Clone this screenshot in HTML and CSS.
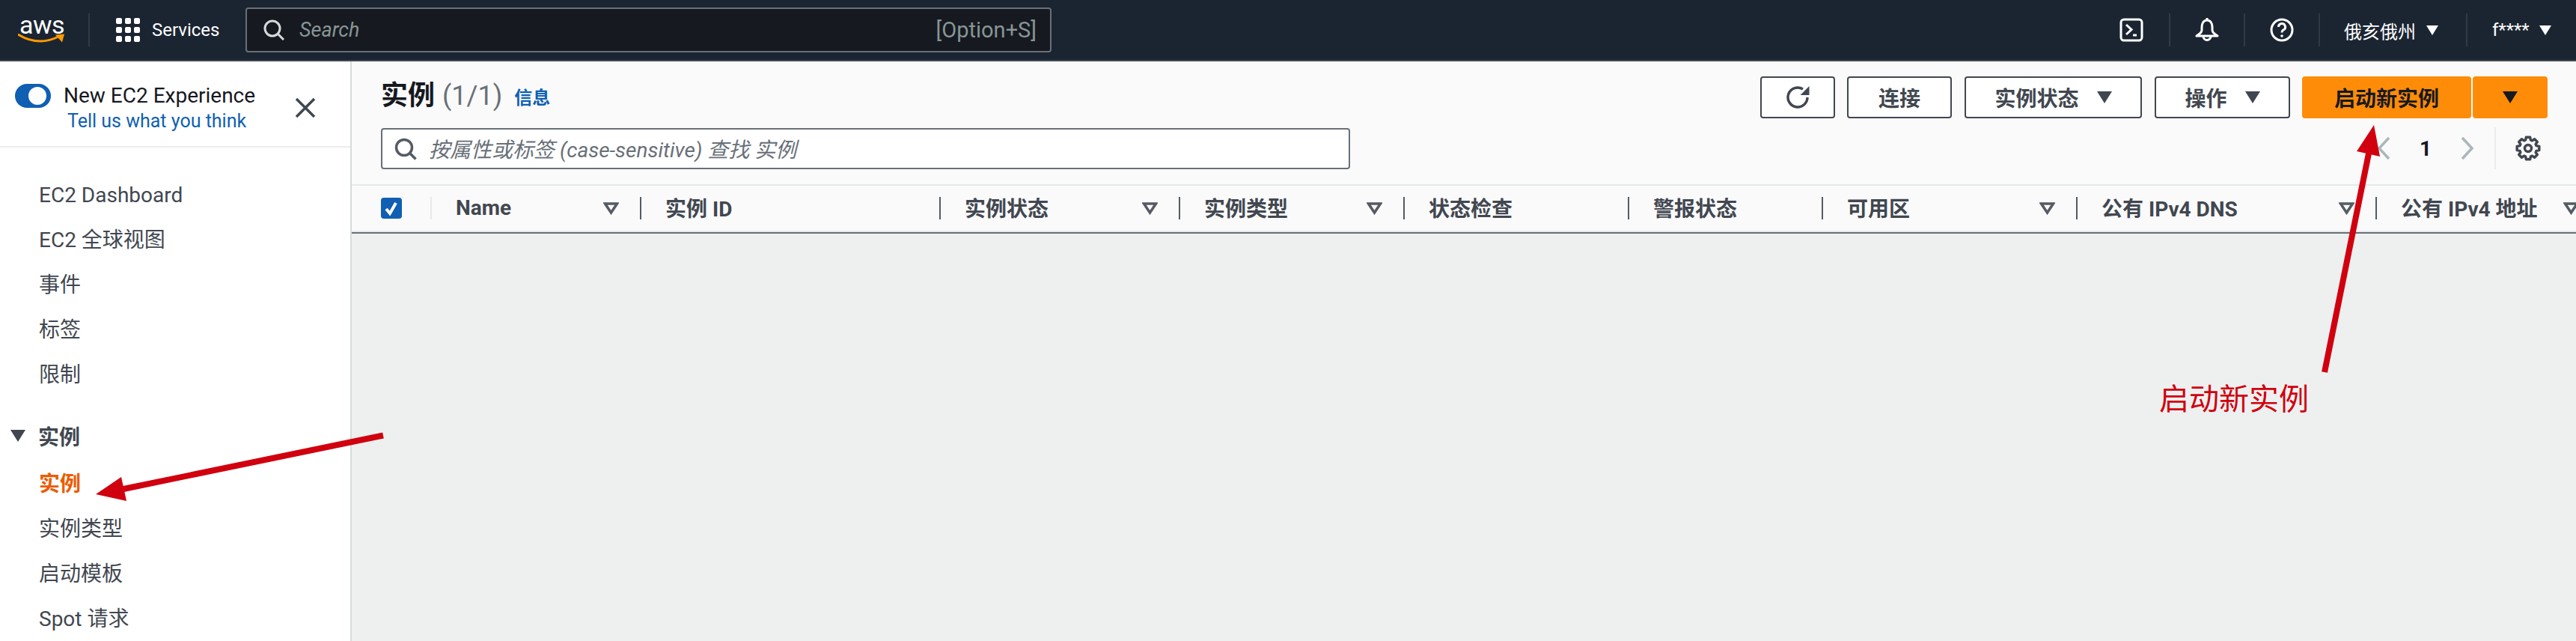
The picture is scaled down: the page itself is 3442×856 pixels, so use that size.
FILE: index.html
```html
<!DOCTYPE html>
<html lang="zh">
<head>
<meta charset="utf-8">
<title>实例 | EC2</title>
<link rel="stylesheet" href="styles.css">
</head>
<body>
<div class="page">
  <header class="topbar">
    <div class="logo">
      <span class="logo-text">aws</span>
      <svg class="logo-smile" viewBox="0 0 63 13" width="63" height="13"><path d="M1 1.5C10 7 19 10 30 10c8 0 17-2.500 25-6.500" fill="none" stroke="#f90" stroke-width="3" stroke-linecap="round"/><path d="M50 1.500l12-1-3 11z" fill="#f90"/></svg>
    </div>
    <div class="services">
      <svg viewBox="0 0 32 32" width="32" height="32" fill="#fff"><rect x="0" y="0" width="8" height="8" rx="2"/><rect x="12" y="0" width="8" height="8" rx="2"/><rect x="24" y="0" width="8" height="8" rx="2"/><rect x="0" y="12" width="8" height="8" rx="2"/><rect x="12" y="12" width="8" height="8" rx="2"/><rect x="24" y="12" width="8" height="8" rx="2"/><rect x="0" y="24" width="8" height="8" rx="2"/><rect x="12" y="24" width="8" height="8" rx="2"/><rect x="24" y="24" width="8" height="8" rx="2"/></svg>
      <span>Services</span>
    </div>
    <div class="global-search">
      <svg class="search-icon" viewBox="0 0 28 28" width="28" height="28" fill="none" stroke="#d5dbdb" stroke-width="3"><circle cx="12" cy="12" r="10"/><path d="M19 19l8 8"/></svg>
      <span class="global-search-text">Search</span>
      <span class="shortcut">[Option+S]</span>
    </div>
    <div class="top-actions">
      <div class="top-cell icon-cell">
        <svg viewBox="0 0 32 32" width="32" height="32" fill="none" stroke="#fff" stroke-width="3"><rect x="2" y="2" width="28" height="28" rx="4"/><path d="M9 9l7 6.500-7 6.500M18 23h5"/></svg>
      </div>
      <div class="top-cell icon-cell">
        <svg viewBox="0 0 32 32" width="32" height="32" fill="none" stroke="#fff" stroke-width="3" stroke-linejoin="round"><path d="M16 3c-5 0-7 5-7 9v4c0 4-3 5-7 8h28c-4-3-7-4-7-8v-4c0-4-2-9-7-9z"/><path d="M11 24.500a5 5 0 0 0 10 0"/><path d="M16 0v3"/></svg>
      </div>
      <div class="top-cell icon-cell">
        <svg viewBox="0 0 32 32" width="32" height="32" fill="none" stroke="#fff" stroke-width="3"><circle cx="16" cy="16" r="14"/><path d="M11.500 12a4.500 4.500 0 1 1 6.500 4c-1.500.8-2 1.800-2 3.500"/><circle cx="16" cy="24" r="1.800" fill="#fff" stroke="none"/></svg>
      </div>
      <div class="top-cell region-cell"><span>俄亥俄州</span><i class="caret caret-white"></i></div>
      <div class="top-cell user-cell"><span>f****</span><i class="caret caret-white"></i></div>
    </div>
  </header>

  <div class="layout">
    <aside class="sidebar">
      <div class="experience">
        <span class="toggle"><span class="toggle-knob"></span></span>
        <div class="experience-text">
          <div class="experience-title">New EC2 Experience</div>
          <a class="experience-link">Tell us what you think</a>
        </div>
        <svg class="close-icon" viewBox="0 0 28 28" width="28" height="28" fill="none" stroke="#414750" stroke-width="3.500"><path d="M2 2l24 24M26 2L2 26"/></svg>
      </div>
      <nav class="nav">
        <div class="nav-item">EC2 Dashboard</div>
        <div class="nav-item">EC2 全球视图</div>
        <div class="nav-item">事件</div>
        <div class="nav-item">标签</div>
        <div class="nav-item">限制</div>
        <div class="nav-group"><i class="caret caret-dark"></i><span>实例</span></div>
        <div class="nav-item nav-active">实例</div>
        <div class="nav-item">实例类型</div>
        <div class="nav-item">启动模板</div>
        <div class="nav-item">Spot 请求</div>
      </nav>
    </aside>

    <main class="content">
      <section class="panel">
        <div class="panel-top">
          <div class="panel-left">
            <div class="title-row">
              <h1 class="title">实例</h1>
              <span class="count">(1/1)</span>
              <a class="info">信息</a>
            </div>
            <div class="filter">
              <svg viewBox="0 0 30 30" width="30" height="30" fill="none" stroke="#545b64" stroke-width="3.500"><circle cx="13" cy="13" r="10.500"/><path d="M20.500 20.500l8 8"/></svg>
              <span class="filter-text">按属性或标签 (case-sensitive) 查找 实例</span>
            </div>
          </div>
          <div class="panel-right">
            <div class="buttons">
              <button class="btn btn-refresh"><svg viewBox="0 0 32 32" width="32" height="32" fill="none" stroke="#414750" stroke-width="3.500"><path d="M29 16a13 13 0 1 1-6-11"/><path d="M31.500 1v12h-12z" fill="#414750" stroke="none"/></svg></button>
              <button class="btn btn-connect">连接</button>
              <button class="btn btn-state"><span>实例状态</span><i class="caret caret-dark"></i></button>
              <button class="btn btn-actions"><span>操作</span><i class="caret caret-dark"></i></button>
              <button class="btn-primary btn-launch">启动新实例</button>
              <button class="btn-primary btn-launch-more"><i class="caret caret-black"></i></button>
            </div>
            <div class="pager">
              <svg class="chev" viewBox="0 0 18 32" width="18" height="32" fill="none" stroke="#aab7b8" stroke-width="3.500"><path d="M16 2L3 16l13 14"/></svg>
              <span class="page-num">1</span>
              <svg class="chev" viewBox="0 0 18 32" width="18" height="32" fill="none" stroke="#aab7b8" stroke-width="3.500"><path d="M2 2l13 14L2 30"/></svg>
              <div class="pager-settings">
                <svg viewBox="0 0 34 34" width="34" height="34" fill="none" stroke="#414750" stroke-width="3.500" stroke-linejoin="round"><g transform="translate(1 1)"><polygon points="18.600,1.200 19.400,5 21.400,5.850 24.600,3.700 28.300,7.400 26.150,10.600 27,12.640 30.800,13.400 30.800,18.600 27,19.360 26.150,21.400 28.300,24.600 24.600,28.300 21.400,26.150 19.400,27 18.600,30.800 13.400,30.800 12.600,27 10.600,26.150 7.400,28.300 3.700,24.600 5.850,21.400 5,19.360 1.200,18.600 1.200,13.400 5,12.640 5.850,10.600 3.700,7.400 7.400,3.700 10.600,5.850 12.600,5 13.400,1.200"/><circle cx="16" cy="16" r="4.500"/></g></svg>
              </div>
            </div>
          </div>
        </div>
        <div class="thead">
          <div class="th th-check"><span class="checkbox"><svg viewBox="0 0 28 28" width="28" height="28" fill="none" stroke="#fff" stroke-width="4"><path d="M7 15l5 6 8-14"/></svg></span></div>
          <div class="th th-first"><span>Name</span><svg class="sort" viewBox="0 0 21 17" width="21" height="17" fill="none" stroke="#545b64" stroke-width="3.500"><path d="M2.500 2h16l-8 12z"/></svg></div>
          <div class="th"><span>实例 ID</span></div>
          <div class="th"><span>实例状态</span><svg class="sort" viewBox="0 0 21 17" width="21" height="17" fill="none" stroke="#545b64" stroke-width="3.500"><path d="M2.500 2h16l-8 12z"/></svg></div>
          <div class="th"><span>实例类型</span><svg class="sort" viewBox="0 0 21 17" width="21" height="17" fill="none" stroke="#545b64" stroke-width="3.500"><path d="M2.500 2h16l-8 12z"/></svg></div>
          <div class="th"><span>状态检查</span></div>
          <div class="th"><span>警报状态</span></div>
          <div class="th"><span>可用区</span><svg class="sort" viewBox="0 0 21 17" width="21" height="17" fill="none" stroke="#545b64" stroke-width="3.500"><path d="M2.500 2h16l-8 12z"/></svg></div>
          <div class="th"><span>公有 IPv4 DNS</span><svg class="sort" viewBox="0 0 21 17" width="21" height="17" fill="none" stroke="#545b64" stroke-width="3.500"><path d="M2.500 2h16l-8 12z"/></svg></div>
          <div class="th"><span>公有 IPv4 地址</span><svg class="sort" viewBox="0 0 21 17" width="21" height="17" fill="none" stroke="#545b64" stroke-width="3.500"><path d="M2.500 2h16l-8 12z"/></svg></div>
        </div>
      </section>
    </main>
  </div>

  <svg class="arrows" viewBox="0 0 3442 856" width="3442" height="856">
    <path d="M512 581.500L165 653" stroke="#d0000f" stroke-width="8" fill="none"/>
    <polygon points="128,660 162,637 169,669" fill="#d0000f"/>
    <path d="M3106 497L3165 205" stroke="#d0000f" stroke-width="8" fill="none"/>
    <polygon points="3172,167 3149,202 3180,209" fill="#d0000f"/>
  </svg>
  <span class="note">启动新实例</span>
</div>
</body>
</html>
```
FILE: styles.css
```css
* { box-sizing: border-box; }
html, body { margin: 0; padding: 0; }
body { font-family: Roboto, "Noto Sans CJK SC", sans-serif; color: #414750; background: #eef0f0; }
.page { position: relative; width: 3442px; height: 856px; overflow: hidden; }

.caret { display: block; width: 0; height: 0; border-left: 10px solid transparent; border-right: 10px solid transparent; border-top: 16px solid #414750; }
.caret-white { border-left-width: 8px; border-right-width: 8px; border-top: 13px solid #fff; }
.caret-black { border-top-color: #16191f; }

.topbar { display: flex; align-items: center; height: 82px; background: #1b2532; border-bottom: 2px solid #414750; color: #fff; }
.logo { position: relative; width: 120px; height: 44px; padding-left: 26px; border-right: 2px solid #2f3a47; flex: none; }
.logo-text { display: block; font-size: 34px; line-height: 30px; letter-spacing: -.5px; font-weight: 400; color: #fff; }
.logo-smile { position: absolute; left: 24px; top: 27px; }
.services { display: flex; align-items: center; gap: 16px; width: 208px; padding-left: 35px; font-size: 24px; flex: none; }
.global-search { display: flex; align-items: center; width: 1077px; height: 60px; padding: 0 18px 0 22px; background: #16191f; border: 2px solid #687078; border-radius: 4px; color: #879596; flex: none; }
.search-icon { flex: none; }
.global-search-text { margin-left: 20px; font-size: 27px; font-style: italic; }
.shortcut { margin-left: auto; font-size: 29px; }
.top-actions { display: flex; align-items: center; margin-left: auto; height: 44px; }
.top-cell { display: flex; align-items: center; height: 44px; }
.top-cell + .top-cell { border-left: 2px solid #2f3a47; }
.icon-cell { width: 100px; justify-content: center; }
.region-cell { width: 197px; padding-left: 32px; gap: 14px; font-size: 24px; }
.user-cell { width: 147px; padding-left: 33px; gap: 13px; font-size: 24px; }

.layout { display: flex; height: 774px; }
.sidebar { width: 470px; flex: none; background: #fff; border-right: 2px solid #d5dbdb; }
.experience { display: flex; align-items: flex-start; height: 115px; padding: 30px 0 0 20px; border-bottom: 2px solid #eaeded; }
.toggle { display: flex; align-items: center; justify-content: flex-end; width: 48px; height: 32px; padding-right: 6px; background: #0f5fb3; border-radius: 16px; flex: none; }
.toggle-knob { display: block; width: 24px; height: 24px; background: #fff; border-radius: 50%; }
.experience-text { width: 312px; margin-left: 17px; margin-top: -2px; flex: none; }
.experience-title { font-size: 28px; line-height: 36px; color: #16191f; white-space: nowrap; }
.experience-link { display: block; font-size: 25px; line-height: 32px; color: #0f5fb3; padding-left: 5px; white-space: nowrap; }
.close-icon { margin: 18px 0 0 -3px; flex: none; }
.nav { padding-top: 34px; }
.nav-item { height: 60px; padding-left: 52px; font-size: 28px; line-height: 60px; color: #414750; white-space: nowrap; }
.nav-group { display: flex; align-items: center; gap: 17px; height: 60px; margin: 21px 0 5px; padding-left: 14px; font-size: 28px; font-weight: 700; color: #414750; }
.nav-active { color: #ec5b00; font-weight: 700; }

.content { flex: 1; min-width: 0; background: #eef0f0; }
.panel { background: #fafafa; }
.panel-top { display: flex; justify-content: space-between; height: 164px; padding: 20px 38px 0 39px; }
.panel-left { width: 1295px; }
.title-row { display: flex; align-items: center; gap: 10px; height: 56px; margin-top: -2px; }
.title { margin: 0; font-size: 36px; line-height: 56px; font-weight: 700; color: #16191f; }
.count { font-size: 36px; color: #687078; }
.info { margin-left: 6px; font-size: 24px; font-weight: 700; color: #0f5fb3; }
.filter { display: flex; align-items: center; height: 55px; margin-top: 15px; padding-left: 16px; background: #fff; border: 2px solid #687078; border-radius: 4px; }
.filter-text { margin-left: 16px; margin-top: -2px; font-size: 28px; font-style: italic; color: #687078; white-space: nowrap; }

.panel-right { display: flex; flex-direction: column; align-items: flex-end; }
.buttons { display: flex; height: 56px; }
.btn { display: flex; align-items: center; justify-content: center; height: 56px; padding: 0; background: #fff; border: 2px solid #414750; border-radius: 4px; font: 700 28px Roboto, "Noto Sans CJK SC", sans-serif; color: #414750; }
.btn-refresh { width: 100px; margin-right: 16px; }
.btn-connect { width: 140px; margin-right: 17px; }
.btn-state { width: 237px; gap: 24px; margin-right: 17px; }
.btn-actions { width: 181px; gap: 24px; margin-right: 16px; }
.btn-primary { display: flex; align-items: center; justify-content: center; height: 56px; padding: 0; background: #ff8c08; border: none; border-radius: 4px; font: 700 28px Roboto, "Noto Sans CJK SC", sans-serif; color: #16191f; }
.btn-launch { width: 226px; margin-right: 2px; }
.btn-launch-more { width: 100px; }
.pager { display: flex; align-items: center; height: 56px; margin-top: 12px; }
.chev { flex: none; }
.page-num { width: 94px; text-align: center; font-size: 28px; font-weight: 700; color: #16191f; }
.pager-settings { display: flex; align-items: center; height: 56px; margin-left: 27px; padding: 0 9px 0 26px; border-left: 2px solid #eaeded; }

.thead { display: grid; grid-template-columns: 105px 280px 400px 320px 300px 300px 259px 340px 400px 300px; align-items: center; width: 3004px; height: 66px; padding-bottom: 2px; background: #fafafa; border-top: 2px solid #e6eaea; border-bottom: 2px solid #687078; box-shadow: inset 0 -2px 0 #e6eaea; }
.th { display: flex; align-items: center; justify-content: space-between; height: 30px; padding: 0 28px 0 32px; border-left: 2px solid #545b64; font-size: 28px; font-weight: 700; color: #414750; white-space: nowrap; }
.th > span:not(.checkbox) { margin-top: -2px; }
.th-check { border-left: none; padding: 0 0 0 39px; justify-content: flex-start; }
.th-first { border-left-color: #e6eaea; }
.checkbox { display: block; width: 28px; height: 28px; background: #0f5fb3; border-radius: 4px; flex: none; }
.checkbox svg { display: block; }
.sort { flex: none; }

.arrows { position: absolute; left: 0; top: 0; pointer-events: none; }
.note { position: absolute; left: 2885px; top: 508px; font-size: 40px; line-height: 52px; color: #d0000f; white-space: nowrap; }
```
